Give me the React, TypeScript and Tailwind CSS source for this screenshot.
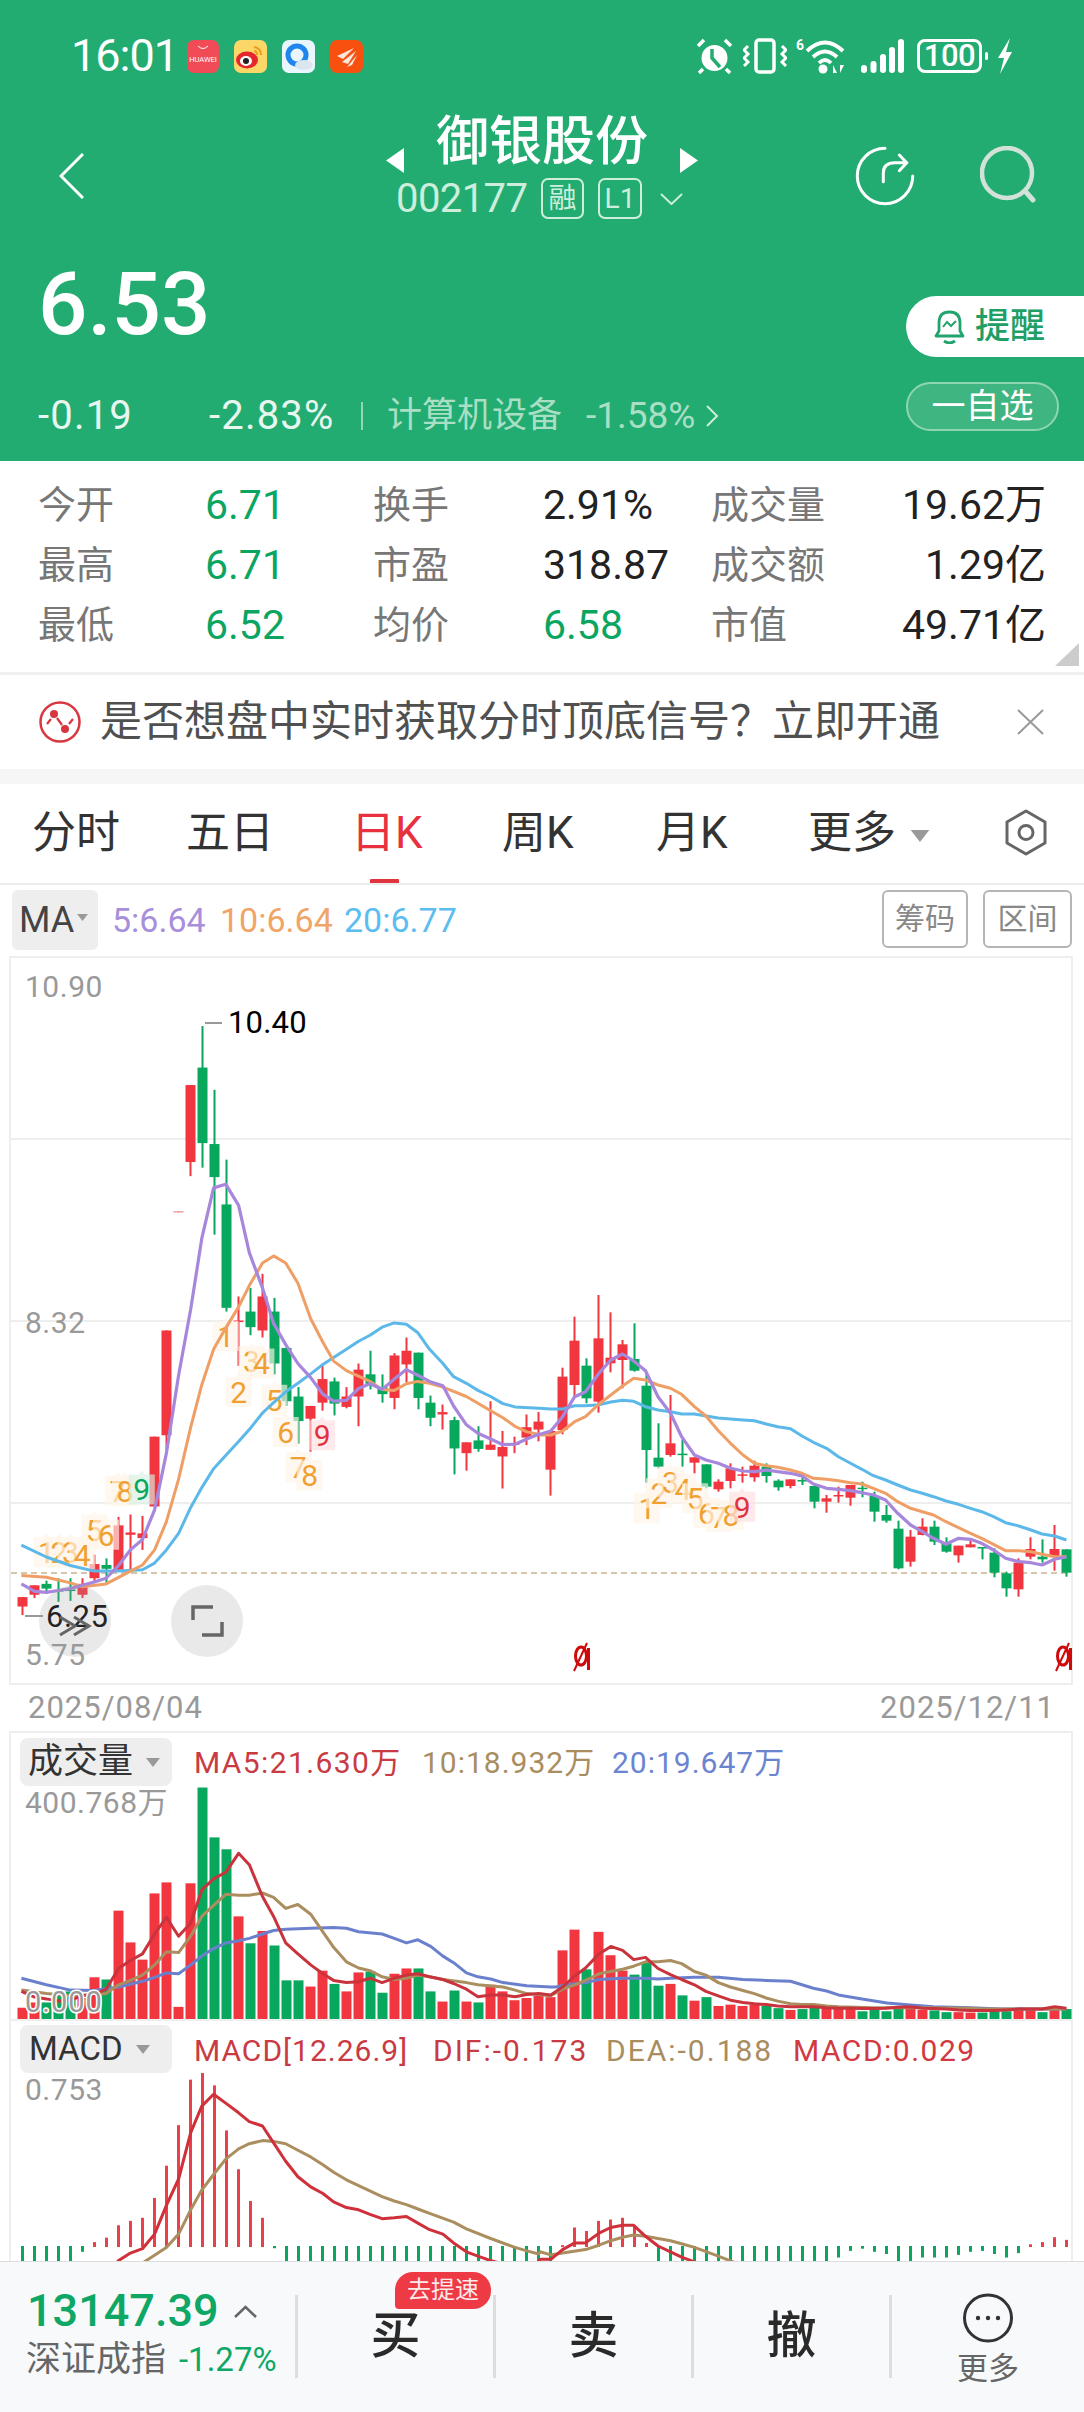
import React from "react";

type P = [number, number];
const z3 = (p: number[]): P => [p[0] / 2.8, 960 + p[1] / 2.119];
const z4 = (p: number[]): P => [540 + p[0] / 2.882, 1200 + p[1] / 3];
const z5 = (p: number[]): P => [p[0] / 2.8, 1720 + p[1] / 2.266];
const z6 = (p: number[]): P => [540 + p[0] / 2.882, 1720 + p[1] / 2.266];
const pts = (a: P[]) => a.map((p) => p[0].toFixed(1) + "," + p[1].toFixed(1)).join(" ");

const RED = "#f2363f";
const GREEN = "#07a75d";

// colour, bodyTop, bodyBottom, wickTop, wickBottom (zoom coordinates)
const candlesA: [string, number, number, number, number][] = [
  ["R", 1350, 1370, 1350, 1388], ["R", 1325, 1345, 1325, 1352], ["G", 1322, 1332, 1315, 1338], ["G", 1335, 1338, 1310, 1360],
  ["G", 1334, 1337, 1310, 1358], ["R", 1322, 1345, 1310, 1352], ["R", 1280, 1310, 1260, 1318], ["G", 1282, 1290, 1268, 1320],
  ["R", 1198, 1292, 1180, 1295], ["R", 1213, 1218, 1175, 1295], ["R", 1215, 1225, 1178, 1250], ["R", 1010, 1158, 1010, 1158],
  ["R", 785, 1007, 785, 1038], ["P", 532, 535, 532, 535], ["R", 265, 428, 265, 458], ["G", 228, 388, 140, 440],
  ["G", 390, 460, 275, 582], ["G", 518, 737, 423, 745], ["R", 764, 767, 713, 860], ["G", 745, 778, 695, 795],
  ["R", 713, 785, 665, 800], ["G", 745, 855, 716, 878], ["G", 822, 935, 822, 945], ["G", 925, 977, 905, 1025],
  ["R", 945, 972, 945, 1042], ["R", 888, 938, 860, 955], ["G", 893, 940, 885, 965], ["R", 925, 947, 905, 950],
  ["R", 868, 925, 855, 988], ["G", 878, 900, 828, 910], ["G", 905, 920, 878, 938], ["R", 838, 928, 833, 952],
  ["R", 828, 857, 800, 895], ["G", 832, 928, 832, 952], ["G", 938, 970, 923, 988], ["R", 958, 963, 942, 995],
  ["G", 975, 1035, 968, 1090], ["R", 1022, 1045, 1022, 1082], ["G", 1018, 1036, 988, 1042], ["R", 1027, 1038, 935, 1038],
  ["R", 1032, 1052, 998, 1120], ["R", 1024, 1027, 1010, 1045], ["R", 990, 1012, 963, 1028], ["R", 978, 995, 958, 1020],
  ["R", 998, 1080, 998, 1135],
];
const candlesB: [string, number, number, number, number][] = [
  ["R", 530, 690, 503, 703], ["R", 422, 555, 350, 590], ["G", 497, 595, 475, 610], ["R", 415, 605, 285, 638],
  ["R", 473, 490, 337, 517], ["R", 433, 480, 420, 565], ["G", 477, 512, 370, 515], ["G", 557, 750, 520, 848],
  ["G", 773, 800, 670, 805], ["R", 730, 765, 585, 770], ["G", 761, 765, 718, 800], ["R", 772, 788, 772, 820],
  ["G", 793, 860, 793, 865], ["R", 845, 868, 838, 875], ["R", 805, 843, 790, 865], ["R", 823, 827, 800, 848],
  ["R", 797, 832, 782, 845], ["G", 800, 828, 790, 848], ["G", 842, 862, 838, 872], ["R", 838, 858, 838, 865],
  ["G", 840, 844, 830, 855], ["G", 858, 905, 858, 925], ["R", 895, 905, 885, 938], ["R", 885, 889, 860, 908],
  ["R", 855, 893, 855, 917], ["G", 863, 867, 845, 892], ["G", 888, 935, 875, 965], ["G", 945, 962, 915, 968],
  ["G", 986, 1105, 962, 1108], ["R", 1010, 1085, 990, 1100], ["R", 980, 1005, 955, 1006], ["G", 980, 1025, 962, 1035],
  ["G", 1030, 1055, 1012, 1058], ["R", 1037, 1066, 1037, 1088], ["R", 1033, 1042, 1015, 1042], ["G", 1041, 1045, 1041, 1078],
  ["G", 1058, 1118, 1045, 1132], ["G", 1120, 1165, 1115, 1190], ["R", 1088, 1168, 1075, 1190], ["R", 1047, 1070, 1012, 1078],
  ["G", 1070, 1078, 1018, 1088], ["R", 1047, 1070, 975, 1112], ["G", 1048, 1118, 1048, 1130],
];

const ma5 = [
  ...([[60,1322],[97,1338],[130,1340],[163,1336],[197,1332],[230,1325],[264,1318],[297,1310],[332,1283],[365,1250],[399,1228],[433,1165],[466,1045],[500,880],[534,740],[565,590],[598,483],[632,475],[668,520],[698,620],[735,695],[766,770],[800,815],[834,855],[870,885],[904,920],[934,935],[970,933],[1004,908],[1036,898],[1070,910],[1104,888],[1138,868],[1170,880],[1203,893],[1240,902],[1270,945],[1306,985],[1338,1003],[1374,1015],[1408,1027],[1442,1026],[1475,1015],[1508,1005]].map(z3)),
  ...([[0,703],[31,693],[65,650],[100,590],[131,575],[170,520],[204,480],[238,462],[270,483],[304,512],[340,590],[376,640],[408,710],[445,765],[478,780],[514,790],[549,805],[585,813],[618,815],[652,810],[685,815],[722,820],[755,828],[788,852],[826,865],[860,868],[895,872],[928,878],[961,885],[996,900],[1031,940],[1068,975],[1102,995],[1134,1015],[1170,1033],[1206,1015],[1241,1018],[1273,1030],[1307,1050],[1342,1075],[1380,1085],[1415,1088],[1447,1095],[1483,1078],[1517,1070]].map(z4)),
];
const ma10 = [
  ...([[60,1304],[130,1308],[197,1320],[230,1328],[297,1322],[332,1308],[365,1295],[399,1282],[433,1250],[466,1190],[500,1100],[534,990],[565,900],[598,825],[632,780],[668,735],[698,690],[735,642],[766,627],[800,642],[834,685],[870,760],[904,810],[934,850],[970,870],[1004,882],[1036,893],[1070,910],[1104,912],[1138,898],[1170,893],[1203,897],[1240,905],[1306,925],[1374,955],[1408,970],[1442,988],[1475,1000],[1508,1005]].map(z3)),
  ...([[0,705],[31,705],[65,693],[100,665],[131,650],[170,612],[204,585],[238,558],[270,535],[304,540],[340,555],[376,565],[408,583],[445,620],[478,648],[514,692],[549,730],[585,765],[618,790],[652,797],[685,802],[722,810],[755,820],[788,835],[826,838],[860,842],[895,848],[928,852],[961,865],[996,880],[1031,905],[1068,925],[1102,935],[1134,945],[1170,965],[1206,983],[1241,1000],[1273,1015],[1307,1033],[1342,1052],[1380,1052],[1415,1055],[1447,1063],[1483,1070],[1517,1070]].map(z4)),
];
const ma20 = [
  ...([[60,1240],[130,1265],[197,1283],[264,1295],[332,1295],[399,1292],[433,1278],[466,1250],[500,1215],[534,1160],[565,1118],[598,1078],[632,1050],[668,1020],[698,995],[735,960],[766,938],[800,915],[834,897],[870,877],[904,857],[934,842],[970,825],[1004,808],[1036,795],[1070,778],[1104,769],[1138,772],[1170,790],[1203,825],[1240,855],[1270,883],[1306,897],[1338,912],[1374,925],[1408,940],[1442,947],[1508,950]].map(z3)),
  ...([[0,625],[31,627],[65,627],[100,617],[131,617],[170,614],[204,606],[238,601],[270,604],[304,620],[340,630],[376,635],[408,642],[445,642],[478,648],[514,654],[549,657],[585,660],[618,662],[652,672],[685,680],[722,686],[755,708],[788,727],[826,745],[860,770],[895,790],[928,808],[961,827],[996,840],[1031,855],[1068,870],[1102,880],[1134,890],[1170,903],[1206,913],[1241,925],[1273,935],[1307,950],[1342,968],[1380,978],[1415,990],[1447,1002],[1483,1008],[1517,1020]].map(z4)),
];

const nine: { p: P; t: string; c?: string }[] = [
  ...([[130,1255,"1"],[165,1255,"2"],[197,1255,"3"],[230,1260,"4"],[264,1207,"5"],[297,1218,"6"],[330,1125,"7"],[350,1125,"8"],[397,1122,"9","G"],[632,797,"1"],[668,915,"2"],[704,850,"3"],[732,855,"4"],[768,932,"5"],[800,1000,"6"],[835,1075,"7"],[867,1092,"8"],[902,1007,"9","R"]] as [number, number, string, string?][]).map((a) => ({ p: z3([a[0], a[1]]), t: a[2], c: a[3] })),
  ...([[308,925,"1"],[343,880,"2"],[376,845,"3"],[412,868,"4"],[447,895,"5"],[480,938,"6"],[515,950,"7"],[550,945,"8"],[583,920,"9","R"]] as [number, number, string, string?][]).map((a) => ({ p: z4([a[0], a[1]]), t: a[2], c: a[3] })),
];

const vols: [string, number][] = [
  ["R",652],["R",640],["G",640],["G",625],["G",615],["R",630],["R",583],["G",588],["R",432],["R",504],["R",543],["R",393],["R",368],["R",650],["R",370],["G",153],["G",266],["G",293],["R",445],["G",506],["R",478],["G",511],["G",590],["G",590],["R",604],["R",568],["G",598],["R",615],["R",572],["G",570],["G",618],["R",575],["R",563],["G",563],["G",615],["R",638],["G",613],["R",638],["G",640],["R",600],["R",615],["R",635],["R",630],["R",625],["R",628],
  ["R",522],["R",475],["G",565],["R",480],["R",533],["R",568],["G",577],["G",550],["G",602],["R",598],["G",624],["R",636],["G",628],["R",648],["R",645],["R",648],["R",645],["G",648],["G",653],["R",657],["G",655],["G",652],["R",650],["R",655],["R",655],["G",660],["G",655],["G",660],["G",652],["R",650],["R",657],["G",658],["G",662],["R",662],["R",663],["G",663],["G",660],["G",660],["R",652],["R",657],["G",662],["R",650],["G",655],
];

const vma5 = [
  ...([[60,615],[97,628],[130,632],[163,637],[197,635],[230,625],[264,622],[297,610],[332,563],[365,545],[399,530],[433,485],[466,447],[500,490],[534,460],[565,385],[598,360],[632,345],[668,302],[698,328],[735,400],[766,445],[800,505],[834,530],[870,555],[904,575],[934,590],[970,595],[1004,593],[1036,585],[1070,595],[1104,585],[1138,578],[1170,575],[1203,582],[1240,588],[1270,597],[1306,610],[1338,627],[1374,623],[1408,623],[1442,627],[1475,622],[1508,620],[1542,623]].map(z5)),
  ...([[65,605],[100,580],[131,562],[170,530],[204,513],[238,522],[270,543],[304,538],[340,563],[376,577],[408,588],[445,600],[478,615],[514,625],[549,635],[585,640],[618,643],[652,645],[685,648],[722,650],[755,650],[788,650],[826,652],[860,653],[895,653],[928,654],[961,654],[996,653],[1031,651],[1068,650],[1102,653],[1134,654],[1170,655],[1206,657],[1241,658],[1273,658],[1307,658],[1342,657],[1380,655],[1415,655],[1447,655],[1483,650],[1517,653]].map(z6)),
];
const vma10 = [
  ...([[60,612],[130,620],[197,625],[264,622],[297,620],[332,600],[365,590],[399,578],[433,555],[466,525],[500,527],[534,490],[565,445],[598,420],[632,395],[668,397],[698,397],[735,392],[766,402],[800,427],[834,418],[870,440],[904,480],[934,515],[970,548],[1004,562],[1036,568],[1070,582],[1104,588],[1138,585],[1170,578],[1203,582],[1240,588],[1306,595],[1338,600],[1408,605],[1442,612],[1475,620],[1542,625]].map(z5)),
  ...([[65,610],[100,600],[131,590],[170,575],[204,570],[238,565],[270,558],[304,548],[340,548],[376,545],[408,552],[445,570],[478,578],[514,595],[549,605],[585,613],[618,620],[652,630],[685,637],[722,643],[755,645],[788,645],[826,648],[860,650],[960,652],[1100,652],[1240,653],[1273,655],[1400,655],[1517,655]].map(z6)),
];
const vma20 = [
  ...([[60,585],[130,600],[197,612],[264,613],[332,605],[399,592],[433,583],[466,573],[500,575],[534,555],[565,535],[598,518],[632,505],[668,500],[698,495],[735,485],[766,477],[800,474],[870,472],[934,470],[970,472],[1004,480],[1070,485],[1104,495],[1138,505],[1170,498],[1206,513],[1240,535],[1270,550],[1306,573],[1338,582],[1374,587],[1408,595],[1475,602],[1542,605]].map(z5)),
  ...([[45,605],[80,600],[131,595],[170,588],[238,585],[304,585],[340,587],[376,585],[445,583],[514,583],[585,588],[652,590],[722,592],[788,608],[826,614],[860,623],[928,632],[1000,641],[1068,646],[1134,650],[1240,652],[1330,655],[1517,655]].map(z6)),
];

// MACD histogram: end value in zoom coordinates, 1195 = zero line
const hist = [1226,1226,1226,1226,1226,1205,1183,1173,1145,1135,1128,1083,1010,918,815,800,828,930,1018,1090,1128,1197,1226,1226,1226,1226,1226,1226,1226,1226,1226,1226,1226,1226,1226,1226,1226,1226,1226,1226,1226,1226,1226,1226,1226,
  1190,1150,1158,1135,1132,1128,1145,1185,1226,1226,1226,1226,1226,1226,1226,1226,1226,1226,1226,1226,1226,1226,1226,1218,1203,1198,1205,1210,1226,1226,1218,1218,1218,1212,1205,1203,1210,1218,1208,1188,1183,1172,1178];

const dif = [
  ...([[298,1255],[332,1225],[365,1208],[399,1198],[433,1165],[466,1100],[500,1040],[534,935],[565,875],[598,848],[632,868],[668,890],[698,910],[735,920],[766,958],[800,1000],[834,1035],[870,1058],[904,1073],[934,1092],[970,1105],[1004,1110],[1036,1120],[1070,1130],[1104,1128],[1138,1125],[1170,1140],[1203,1155],[1240,1165],[1270,1185],[1306,1205],[1338,1215],[1374,1225],[1442,1240],[1500,1240]].map(z5)),
  ...([[0,1222],[31,1222],[65,1200],[100,1185],[131,1185],[170,1163],[204,1150],[238,1145],[270,1145],[304,1170],[340,1192],[376,1205],[408,1217],[445,1228],[500,1240]].map(z6)),
];
const dea = [
  ...([[400,1230],[466,1195],[500,1165],[534,1110],[565,1065],[598,1030],[632,995],[668,972],[698,960],[735,953],[766,955],[800,960],[834,975],[870,990],[904,1008],[934,1025],[970,1042],[1004,1055],[1070,1080],[1104,1090],[1138,1098],[1170,1108],[1203,1118],[1270,1138],[1306,1153],[1374,1175],[1442,1195],[1475,1203],[1508,1210]].map(z5)),
  ...([[0,1205],[31,1212],[65,1208],[131,1200],[170,1190],[204,1180],[238,1172],[270,1167],[304,1170],[340,1175],[376,1180],[408,1187],[445,1195],[514,1215],[580,1235]].map(z6)),
];

const cx = (i: number) => 22.5 + 12 * i;

function KLine() {
  const all = [
    ...candlesA.map((c) => ({ c, f: z3 })),
    ...candlesB.map((c) => ({ c, f: z4 })),
  ];
  return (
    <svg className="absolute left-0 top-0" width="1084" height="729" viewBox="0 956 1084 729">
      <g stroke="#eeeeee" strokeWidth="2">
        <line x1="10" x2="1072" y1="957" y2="957" />
        <line x1="10" x2="1072" y1="1139" y2="1139" />
        <line x1="10" x2="1072" y1="1321" y2="1321" />
        <line x1="10" x2="1072" y1="1503" y2="1503" />
        <line x1="10" x2="1072" y1="1684" y2="1684" />
        <line x1="10" x2="10" y1="956" y2="1685" />
        <line x1="1072" x2="1072" y1="956" y2="1685" />
      </g>
      <line x1="11" x2="1071" y1="1573" y2="1573" stroke="#c9b48f" strokeWidth="1.5" strokeDasharray="6 4" />
      {all.map(({ c, f }, i) => {
        const col = c[0] === "R" ? RED : c[0] === "G" ? GREEN : "#f0a0a5";
        const x = cx(i);
        const bt = f([0, c[1]])[1];
        const bb = f([0, c[2]])[1];
        const wt = f([0, c[3]])[1];
        const wb = f([0, c[4]])[1];
        return (
          <g key={i}>
            <rect x={x - 1} y={wt} width={2} height={wb - wt} fill={col} />
            <rect x={x - 5} y={bt} width={10} height={Math.max(bb - bt, 1.5)} fill={col} />
          </g>
        );
      })}
      {nine.map((n, i) => {
        const [x, y] = n.p;
        const bg = n.c === "G" ? "#d8f0e3" : n.c === "R" ? "#fddfe1" : "#fff5e9";
        const fg = n.c === "G" ? GREEN : n.c === "R" ? "#e0323f" : "#f0a030";
        return (
          <g key={i}>
            <path d={`M${x - 13} ${y - 15} L${x - 3} ${y - 15} L${x} ${y - 19} L${x + 3} ${y - 15} L${x + 13} ${y - 15} L${x + 13} ${y + 15} L${x - 13} ${y + 15} Z`} fill={bg} fillOpacity="0.65" />
            <text x={x} y={y + 11} textAnchor="middle" fontSize="30" fill={fg}>{n.t}</text>
          </g>
        );
      })}
      <polyline points={pts(ma20)} fill="none" stroke="#5bb8e8" strokeWidth="3" strokeLinejoin="round" />
      <polyline points={pts(ma10)} fill="none" stroke="#ef9f65" strokeWidth="3" strokeLinejoin="round" />
      <polyline points={pts(ma5)} fill="none" stroke="#a687dc" strokeWidth="3.2" strokeLinejoin="round" />
      <line x1="205" x2="222" y1="1023" y2="1023" stroke="#777" strokeWidth="1.5" />
      <text x="228" y="1033" fontSize="31" fill="#000" letterSpacing="0.2">10.40</text>
      <line x1="25" x2="43" y1="1616" y2="1616" stroke="#777" strokeWidth="1.5" />
      <text x="46" y="1627" fontSize="31" fill="#000" letterSpacing="0.5">6.25</text>
      <circle cx="75" cy="1621" r="36" fill="#999" fillOpacity="0.22" />
      <circle cx="207" cy="1621" r="36" fill="#999" fillOpacity="0.22" />
      <path d="M60 1617 L75 1626 L60 1635 M74 1617 L89 1626 L74 1635" fill="none" stroke="#666" strokeWidth="3" />
      <path d="M193 1620 L193 1607 L213 1607 M222 1622 L222 1635 L202 1635" fill="none" stroke="#666" strokeWidth="3.5" />
      {[573, 1055].map((x) => (
        <g key={x} fill="none" stroke="#cf0a0a">
          <ellipse cx={x + 8} cy="1656" rx="5.5" ry="9" strokeWidth="3" />
          <line x1={x + 15.5} x2={x + 15.5} y1="1648" y2="1670" strokeWidth="3" />
          <line x1={x + 1} x2={x + 14} y1="1671" y2="1643" strokeWidth="2" />
        </g>
      ))}
    </svg>
  );
}

function Volume() {
  return (
    <svg className="absolute left-0 top-0" width="1084" height="290" viewBox="0 1731 1084 290">
      <g stroke="#eeeeee" strokeWidth="2">
        <line x1="10" x2="1072" y1="1732" y2="1732" />
        <line x1="10" x2="10" y1="1731" y2="2021" />
        <line x1="1072" x2="1072" y1="1731" y2="2021" />
        <line x1="10" x2="1072" y1="2020" y2="2020" />
      </g>
      {vols.map((v, i) => {
        const top = i < 45 ? z5([0, v[1]])[1] : z6([0, v[1]])[1];
        return <rect key={i} x={cx(i) - 5} y={top} width={10} height={2019 - top} fill={v[0] === "R" ? RED : GREEN} />;
      })}
      <polyline points={pts(vma20)} fill="none" stroke="#6b80cc" strokeWidth="3" strokeLinejoin="round" />
      <polyline points={pts(vma10)} fill="none" stroke="#ab8e5f" strokeWidth="3" strokeLinejoin="round" />
      <polyline points={pts(vma5)} fill="none" stroke="#c8333c" strokeWidth="3" strokeLinejoin="round" />
      <text x="25" y="2012" fontSize="29" fill="#999" stroke="#ffffff" strokeWidth="3" className="[paint-order:stroke]" letterSpacing="1">0.000</text>
    </svg>
  );
}

function Macd() {
  return (
    <svg className="absolute left-0 top-0" width="1084" height="240" viewBox="0 2021 1084 240">
      <g stroke="#eeeeee" strokeWidth="2">
        <line x1="10" x2="10" y1="2021" y2="2261" />
        <line x1="1072" x2="1072" y1="2021" y2="2261" />
      </g>
      {hist.map((h, i) => {
        const y = 1720 + h / 2.266;
        const zero = 2247;
        const up = y < zero;
        const green = i < 6 || (i > 20 && i < 45) || (i > 52 && i < 84);
        const y1 = green ? 2246 : up ? y : zero - 2;
        const y2 = green ? y + (h === 1226 ? 6 : 0) : zero;
        return <rect key={i} x={cx(i) - 1.5} y={y1} width={3} height={Math.max(y2 - y1, 2)} fill={green ? GREEN : "#ea4049"} />;
      })}
      <polyline points={pts(dea)} fill="none" stroke="#ab8e5f" strokeWidth="3" strokeLinejoin="round" />
      <polyline points={pts(dif)} fill="none" stroke="#cf3039" strokeWidth="3" strokeLinejoin="round" />
    </svg>
  );
}

function StatusIcons() {
  return (
    <div className="flex items-center ml-[15px] gap-[15px]">
      <svg width="32" height="33" viewBox="0 0 32 33">
        <rect width="32" height="33" rx="7" fill="#f04b57" />
        <path d="M11 6 Q16 11 21 6" fill="none" stroke="#fff" strokeWidth="1" />
        <text x="16" y="22" textAnchor="middle" fontSize="7.5" fill="#fff">HUAWEI</text>
      </svg>
      <svg width="33" height="33" viewBox="0 0 33 33">
        <rect width="33" height="33" rx="7" fill="#fbd768" />
        <ellipse cx="13" cy="20" rx="11" ry="8.5" fill="#e5262d" />
        <ellipse cx="12" cy="21" rx="6" ry="5" fill="#fff" />
        <circle cx="12" cy="21" r="3" fill="#222" />
        <path d="M20 7 Q27 8 27 15 M20 11 Q23 11 23 15" fill="none" stroke="#f09a1a" strokeWidth="2" />
      </svg>
      <svg width="33" height="33" viewBox="0 0 33 33">
        <rect width="33" height="33" rx="7" fill="#eaf6fd" />
        <circle cx="15" cy="15" r="9" fill="none" stroke="#1f86ee" strokeWidth="5" />
        <ellipse cx="22" cy="25" rx="9" ry="5" fill="#dbe6ee" />
      </svg>
      <svg width="33" height="33" viewBox="0 0 33 33">
        <rect width="33" height="33" rx="7" fill="#f7500f" />
        <path d="M7 16 L24 8 L13 19 Z M12 22 L26 11 L18 24 Z M17 27 L27 15 L22 25 Z" fill="#fbe6da" />
      </svg>
    </div>
  );
}

function StatusRight() {
  return (
    <div className="flex items-center ml-auto h-[36px]">
      <svg width="37" height="36" viewBox="0 0 37 36" className="shrink-0">
        <circle cx="18.5" cy="20" r="13" fill="#fff" />
        <path d="M16 11 L16 20 L24 29" fill="none" stroke="#23ac71" strokeWidth="3.5" />
        <path d="M2 8 L8 2 M35 8 L29 2 M7 31 L3 35 M30 31 L34 35" stroke="#fff" strokeWidth="3.5" />
      </svg>
      <svg width="44" height="36" viewBox="0 0 44 36" className="ml-[10px] shrink-0">
        <rect x="13" y="2" width="18" height="32" rx="3" fill="none" stroke="#fff" strokeWidth="3.5" />
        <path d="M5 8 L1 12 L5 16 L1 20 L5 24 L1 28 M39 8 L43 12 L39 16 L43 20 L39 24 L43 28" fill="none" stroke="#fff" strokeWidth="3" />
      </svg>
      <svg width="50" height="36" viewBox="0 0 50 36" className="ml-[9px] shrink-0">
        <text x="0" y="12" fontSize="14" fontWeight="700" fill="#fff">6</text>
        <path d="M11 13 Q29 -4 47 13 M17 19 Q29 8 41 19 M23 25 Q29 19 35 25" fill="none" stroke="#fff" strokeWidth="3.8" />
        <circle cx="27" cy="31" r="4.5" fill="#fff" />
        <path d="M37 35 L37 27 L41 35 Z M44 27 L44 35 L48 27 Z" fill="#fff" />
      </svg>
      <svg width="43" height="36" viewBox="0 0 43 36" className="ml-[15px] shrink-0">
        <g fill="#fff">
          <rect x="0" y="27" width="6" height="8" rx="3" />
          <rect x="9.5" y="23" width="6" height="12" rx="3" />
          <rect x="19" y="16" width="6" height="19" rx="3" />
          <rect x="28" y="9" width="6" height="26" rx="3" />
          <rect x="37" y="1" width="6" height="34" rx="3" />
        </g>
      </svg>
      <div className="ml-[13px] shrink-0 flex items-center justify-center w-[65px] h-[34px] border-[3px] border-white rounded-[8px] text-white text-[31px] leading-[28px] tracking-[-0.5px] font-medium">100</div>
      <div className="ml-[3px] shrink-0 w-[3px] h-[8px] rounded-[2px] bg-white" />
      <svg width="16" height="36" viewBox="0 0 16 36" className="ml-[9px] shrink-0">
        <path d="M13 0 L1 20 L7 20 L3 36 L15 14 L9 14 Z" fill="#fff" />
      </svg>
    </div>
  );
}

function Stat({ l }: { l: string }) {
  return <div className="text-[38px] leading-[60px] text-[#777]">{l}</div>;
}
function Val({ v, g, r }: { v: string; g?: boolean; r?: boolean }) {
  return (
    <div className={`text-[41px] leading-[60px] whitespace-nowrap ${g ? "text-[#0aa561]" : "text-[#222]"} ${r ? "text-right" : ""}`}>{v}</div>
  );
}

function Tab({ w, t, a }: { w: string; t: string; a?: boolean }) {
  return (
    <div className={`${w} relative text-[44px] leading-[99px] ${a ? "text-[#e8303f]" : "text-[#333]"}`}>
      {t}
      {a ? <div className="absolute left-[19px] bottom-0 w-[29px] h-[4px] bg-[#e0343f] rounded-t-[1px]" /> : null}
    </div>
  );
}

function Tri({ c = "#999", w = 14, h = 9 }: { c?: string; w?: number; h?: number }) {
  return (
    <svg width={w} height={h} viewBox="0 0 14 9">
      <path d="M0 0 L14 0 L7 9 Z" fill={c} />
    </svg>
  );
}

export default function App() {
  return (
    <div className="w-[1084px] h-[2412px] overflow-hidden bg-white font-['Roboto','Noto_Sans_CJK_SC',sans-serif]">
      {/* Header */}
      <header className="h-[461px] bg-[#23ac71] text-white pt-[38px]">
        <div className="flex items-center h-[36px] pl-[71px] pr-[71px]">
          <div className="text-[45px] leading-[36px] tracking-[-1px] w-[101px] whitespace-nowrap">16:01</div>
          <StatusIcons />
          <StatusRight />
        </div>
        <div className="flex items-start pt-[39px] pl-[59px] h-[156px]">
          <svg width="25" height="46" viewBox="0 0 25 46" className="mt-[40px]">
            <path d="M24 1 L2 23 L24 45" fill="none" stroke="#fff" strokeWidth="3" />
          </svg>
          <div className="ml-[302px] w-[312px]">
            <div className="flex items-center h-[50px] mt-[4px]">
              <svg width="18" height="25" viewBox="0 0 18 25" className="mt-[36px]"><path d="M18 0 L0 12.5 L18 25 Z" fill="#fff" /></svg>
              <div className="ml-[32px] w-[214px] text-[53px] leading-[50px] font-medium whitespace-nowrap">御银股份</div>
              <svg width="18" height="25" viewBox="0 0 18 25" className="ml-[30px] mt-[36px]"><path d="M0 0 L18 12.5 L0 25 Z" fill="#fff" /></svg>
            </div>
            <div className="flex items-center h-[41px] mt-[11px] pl-[10px] text-[#cdeedd]">
              <div className="text-[40px] leading-[41px] w-[145px] tracking-[-0.6px]">002177</div>
              <div className="w-[43px] h-[41px] border-2 border-[#cdeedd] rounded-[7px] flex items-center justify-center text-[28px] leading-[36px]">融</div>
              <div className="ml-[14px] w-[44px] h-[41px] border-2 border-[#cdeedd] rounded-[7px] flex items-center justify-center text-[28px] leading-[36px]">L1</div>
              <svg width="23" height="12" viewBox="0 0 23 12" className="ml-[18px]"><path d="M1 1 L11.5 11 L22 1" fill="none" stroke="#cdeedd" strokeWidth="2" /></svg>
            </div>
          </div>
          <svg width="60" height="60" viewBox="0 0 60 60" className="ml-[157px] mt-[33px]">
            <path d="M30 2.3 A27.7 27.7 0 1 0 57.7 30" fill="none" stroke="#fff" strokeWidth="3" strokeLinecap="round" />
            <path d="M28.3 35.7 L28.3 27 Q28.3 16.7 40 16.7 L51 16.7 M44.3 9 L51.7 16.7 L44.3 24.7" fill="none" stroke="#fff" strokeWidth="3" strokeLinecap="round" />
          </svg>
          <svg width="56" height="58" viewBox="0 0 56 58" className="ml-[65px] mt-[33px]">
            <circle cx="27" cy="27" r="25" fill="none" stroke="#d2e2d9" strokeWidth="4.5" />
            <path d="M45 45 L53 54" stroke="#d2e2d9" strokeWidth="5" strokeLinecap="round" />
          </svg>
        </div>
        <div className="flex justify-between h-[231px]">
          <div className="pl-[38px]">
            <div className="mt-[36px] h-[76px] text-[87px] leading-[76px] font-medium">6.53</div>
            <div className="mt-[49px] flex items-center h-[50px] text-[40px] leading-[50px] tracking-[1.2px] text-[#e8f6ef]">
              <div className="w-[171px]">-0.19</div>
              <div className="w-[152px]">-2.83%</div>
              <div className="w-[2px] h-[28px] bg-[#ffffff80] mr-[24px]" />
              <div className="text-[35px] tracking-normal text-[#a9dfc5] w-[199px]">计算机设备</div>
              <div className="text-[37px] tracking-normal text-[#a9dfc5] w-[119px]">-1.58%</div>
              <svg width="14" height="24" viewBox="0 0 14 24"><path d="M2 2 L12 12 L2 22" fill="none" stroke="#cdeedd" strokeWidth="2" /></svg>
            </div>
          </div>
          <div className="w-[178px]">
            <div className="mt-[66px] h-[61px] flex items-center bg-white rounded-l-full pl-[27px] text-[#1f9e66]">
              <svg width="33" height="34" viewBox="0 0 33 34">
                <path d="M3 26 L6 21 L6 13 Q6 2 16.5 2 Q27 2 27 13 L27 21 L30 26 Z" fill="none" stroke="#23a46c" strokeWidth="2.8" strokeLinejoin="round" />
                <path d="M11 31 Q16.5 35 22 31" fill="none" stroke="#23a46c" strokeWidth="2.8" />
                <path d="M10 17 L14 12 L18 16 L23 11" fill="none" stroke="#23a46c" strokeWidth="2" />
              </svg>
              <div className="ml-[9px] text-[35px] leading-[61px] font-medium">提醒</div>
            </div>
            <div className="mt-[25px] w-[153px] h-[49px] flex items-center justify-center rounded-full border-2 border-[#8fd4b3] bg-[#3fb582] text-[34px] leading-[45px]">一自选</div>
          </div>
        </div>
      </header>

      {/* Quote stats */}
      <section className="relative h-[214px] border-b-[3px] border-[#f0f0f0] pt-[14px] px-[38px]">
        <div className="grid grid-cols-[167px_168px_170px_168px_120px_1fr]">
          <Stat l="今开" /><Val v="6.71" g /><Stat l="换手" /><Val v="2.91%" /><Stat l="成交量" /><Val v="19.62万" r />
          <Stat l="最高" /><Val v="6.71" g /><Stat l="市盈" /><Val v="318.87" /><Stat l="成交额" /><Val v="1.29亿" r />
          <Stat l="最低" /><Val v="6.52" g /><Stat l="均价" /><Val v="6.58" g /><Stat l="市值" /><Val v="49.71亿" r />
        </div>
        <svg width="24" height="23" viewBox="0 0 24 23" className="absolute right-[5px] bottom-[6px]"><path d="M24 0 L24 23 L0 23 Z" fill="#cccccc" /></svg>
      </section>

      {/* Signal banner */}
      <section className="h-[94px] flex items-center pl-[39px] pr-[40px]">
        <svg width="42" height="42" viewBox="0 0 42 42">
          <circle cx="21" cy="21" r="19.5" fill="none" stroke="#d9363f" strokeWidth="2.5" />
          <circle cx="15" cy="13" r="4" fill="#d9363f" />
          <circle cx="26" cy="28" r="4" fill="#d9363f" />
          <path d="M8 23 L12 18 M18 17 L23 24 M30 23 L34 18" stroke="#d9363f" strokeWidth="2.2" />
        </svg>
        <div className="ml-[19px] text-[42px] leading-[94px] text-[#505050] whitespace-nowrap">是否想盘中实时获取分时顶底信号？立即开通</div>
        <svg width="27" height="26" viewBox="0 0 27 26" className="ml-auto"><path d="M1 1 L26 25 M26 1 L1 25" stroke="#999" strokeWidth="2" /></svg>
      </section>
      <div className="h-[15px] bg-[#f6f6f6]" />

      {/* Tabs */}
      <nav className="h-[101px] border-b-2 border-[#ececec] flex items-start pl-[32px]">
        <Tab w="w-[154px]" t="分时" />
        <Tab w="w-[165px]" t="五日" />
        <Tab w="w-[151px]" t="日K" a />
        <Tab w="w-[154px]" t="周K" />
        <Tab w="w-[152px]" t="月K" />
        <div className="flex items-center h-[99px]">
          <div className="text-[44px] leading-[99px] text-[#333]">更多</div>
          <div className="ml-[14px] mt-[4px]"><Tri c="#9a9a9a" w={20} h={12} /></div>
          <svg width="44" height="47" viewBox="0 0 44 47" className="ml-[74px] -mt-[3px]">
            <path d="M22 2 L41 13 L41 34 L22 45 L3 34 L3 13 Z" fill="none" stroke="#666" strokeWidth="3" strokeLinejoin="round" />
            <circle cx="22" cy="23.5" r="7" fill="none" stroke="#666" strokeWidth="3" />
          </svg>
        </div>
      </nav>

      {/* MA legend */}
      <div className="h-[71px] flex items-start pt-[5px] pl-[12px]">
        <div className="w-[86px] h-[60px] bg-[#eeeeee] rounded-[6px] flex items-center pl-[7px] text-[36px] leading-[60px] text-[#444]">
          MA<span className="ml-[3px] mb-[6px]"><Tri c="#999" w={11} h={7} /></span>
        </div>
        <div className="ml-[14px] text-[34px] leading-[60px] text-[#a78fdc] w-[108px]">5:6.64</div>
        <div className="text-[34px] leading-[60px] text-[#f0a566] w-[124px]">10:6.64</div>
        <div className="text-[34px] leading-[60px] text-[#5bbdf0]">20:6.77</div>
        <div className="ml-auto flex gap-[15px] pr-[12px]">
          <div className="w-[86px] h-[58px] border-2 border-[#b5b5b5] rounded-[6px] flex items-center justify-center text-[30px] leading-[54px] text-[#888]">筹码</div>
          <div className="w-[89px] h-[58px] border-2 border-[#b5b5b5] rounded-[6px] flex items-center justify-center text-[30px] leading-[54px] text-[#888]">区间</div>
        </div>
      </div>

      {/* K-line */}
      <div className="relative h-[729px]">
        <KLine />
        <div className="absolute left-[25px] top-[15px] text-[30px] leading-[32px] tracking-[0.5px] text-[#999]">10.90</div>
        <div className="absolute left-[25px] top-[351px] text-[30px] leading-[32px] tracking-[0.5px] text-[#999]">8.32</div>
        <div className="absolute left-[25px] top-[683px] text-[30px] leading-[32px] tracking-[0.5px] text-[#999]">5.75</div>
      </div>
      <div className="h-[46px] flex items-center justify-between pl-[28px] pr-[29px] text-[31px] leading-[46px] tracking-[1px] text-[#999]">
        <div>2025/08/04</div>
        <div>2025/12/11</div>
      </div>

      {/* Volume */}
      <div className="relative h-[290px]">
        <Volume />
        <div className="relative flex items-center pt-[7px] pl-[20px] text-[30px] leading-[48px] tracking-[1px] whitespace-nowrap">
          <div className="w-[152px] h-[48px] bg-[#eeeeee] rounded-[8px] flex items-center pl-[8px] text-[35px] text-[#333] tracking-normal">
            成交量<span className="ml-[13px]"><Tri c="#999" /></span>
          </div>
          <div className="ml-[22px] w-[228px] tracking-[1.4px] text-[#c93a42] translate-y-[1px]">MA5:21.630万</div>
          <div className="w-[190px] text-[#a88d5f] translate-y-[1px]">10:18.932万</div>
          <div className="text-[#6b84cf] translate-y-[1px]">20:19.647万</div>
        </div>
        <div className="relative pl-[25px] text-[30px] leading-[34px] tracking-[0.5px] text-[#999]">400.768万</div>
      </div>

      {/* MACD */}
      <div className="relative h-[240px] overflow-hidden">
        <Macd />
        <div className="relative flex items-center pt-[4px] pl-[20px] text-[30px] leading-[48px] tracking-[2px] whitespace-nowrap">
          <div className="w-[152px] h-[48px] bg-[#eeeeee] rounded-[8px] flex items-center pl-[9px] text-[33px] text-[#333] tracking-normal">
            MACD<span className="ml-[13px]"><Tri c="#999" /></span>
          </div>
          <div className="ml-[22px] w-[239px] tracking-[1px] text-[#c93a42] translate-y-[2px]">MACD[12.26.9]</div>
          <div className="w-[173px] text-[#c93a42] translate-y-[2px]">DIF:-0.173</div>
          <div className="w-[187px] text-[#a88d5f] translate-y-[2px]">DEA:-0.188</div>
          <div className="text-[#d0393f] tracking-[1.5px] translate-y-[2px]">MACD:0.029</div>
        </div>
        <div className="relative pl-[25px] text-[30px] leading-[34px] tracking-[0.5px] text-[#999]">0.753</div>
      </div>

      {/* Bottom bar */}
      <footer className="h-[151px] bg-[#f8f9fb] border-t border-[#dddddd] flex items-start pt-[33px]">
        <div className="w-[295px] h-[83px] pl-[27px]">
          <div className="flex items-center h-[38px] -mt-[3px] text-[45px] leading-[38px] font-medium text-[#0ea765]">
            13147.39
            <svg width="23" height="13" viewBox="0 0 23 13" className="ml-[15px]"><path d="M1 12 L11.5 2 L22 12" fill="none" stroke="#666" strokeWidth="2.5" /></svg>
          </div>
          <div className="flex items-center mt-[8px] -ml-[1px] h-[44px] leading-[44px]">
            <div className="text-[35px] text-[#666] w-[153px]">深证成指</div>
            <div className="text-[33px] text-[#0ea765]">-1.27%</div>
          </div>
        </div>
        <div className="relative w-[198px] h-[83px] border-l-[3px] border-[#dddddd] flex items-center justify-center text-[50px] leading-[83px] font-medium text-[#2a2a2a]">
          买
          <div className="absolute left-[97px] -top-[23px] w-[96px] h-[37px] bg-[#ee3a45] rounded-[18px] rounded-bl-[4px] flex items-center justify-center text-[24px] leading-[37px] font-normal text-[#fde9ea]">去提速</div>
        </div>
        <div className="w-[198px] h-[83px] border-l-[3px] border-[#dddddd] flex items-center justify-center text-[50px] leading-[83px] font-medium text-[#2a2a2a]">卖</div>
        <div className="w-[198px] h-[83px] border-l-[3px] border-[#dddddd] flex items-center justify-center text-[50px] leading-[83px] font-medium text-[#2a2a2a]">撤</div>
        <div className="w-[195px] h-[83px] border-l-[3px] border-[#dddddd] flex flex-col items-center">
          <svg width="50" height="50" viewBox="0 0 50 50" className="-mt-[2px] shrink-0">
            <ellipse cx="25" cy="25" rx="23.5" ry="23" fill="none" stroke="#333" strokeWidth="3" />
            <circle cx="15" cy="25" r="2.2" fill="#333" /><circle cx="25" cy="25" r="2.2" fill="#333" /><circle cx="35" cy="25" r="2.2" fill="#333" />
          </svg>
          <div className="shrink-0 text-[31px] leading-[36px] mt-[8px] text-[#666]">更多</div>
        </div>
      </footer>
    </div>
  );
}
